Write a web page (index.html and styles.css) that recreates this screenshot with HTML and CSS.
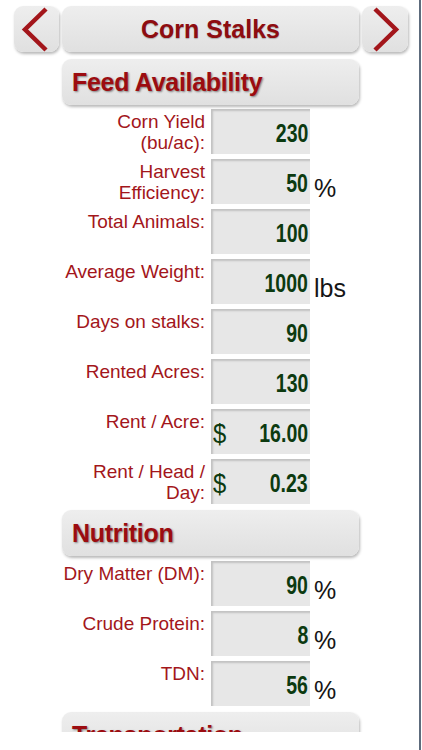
FILE: index.html
```html
<!DOCTYPE html>
<html>
<head>
<meta charset="utf-8">
<link rel="stylesheet" href="styles.css">
</head>
<body>
<div class="frame">
  <div class="screen">
    <div class="topbar">
      <div class="btn nav-btn left">
        <svg width="45" height="46" viewBox="0 0 45 46"><polyline points="32,3 11,23.5 32,44" fill="none" stroke="#a3161b" stroke-width="4.5"/></svg>
      </div>
      <div class="btn title">Corn Stalks</div>
      <div class="btn nav-btn right">
        <svg width="46" height="46" viewBox="0 0 46 46"><polyline points="13,3 34,23.5 13,44" fill="none" stroke="#a3161b" stroke-width="4.5"/></svg>
      </div>
    </div>

    <div class="btn section first">Feed Availability</div>

    <div class="row"><div class="label">Corn Yield<br>(bu/ac):</div><div class="box"><span class="val">230</span></div></div>
    <div class="row"><div class="label">Harvest<br>Efficiency:</div><div class="box"><span class="val">50</span></div><div class="unit">%</div></div>
    <div class="row"><div class="label">Total Animals:</div><div class="box"><span class="val">100</span></div></div>
    <div class="row"><div class="label">Average Weight:</div><div class="box"><span class="val">1000</span></div><div class="unit">lbs</div></div>
    <div class="row"><div class="label">Days on stalks:</div><div class="box"><span class="val">90</span></div></div>
    <div class="row"><div class="label">Rented Acres:</div><div class="box"><span class="val">130</span></div></div>
    <div class="row"><div class="label">Rent / Acre:</div><div class="box"><span class="cur">$</span><span class="val">16.00</span></div></div>
    <div class="row"><div class="label">Rent / Head /<br>Day:</div><div class="box"><span class="cur">$</span><span class="val">0.23</span></div></div>

    <div class="btn section">Nutrition</div>

    <div class="row"><div class="label">Dry Matter (DM):</div><div class="box"><span class="val">90</span></div><div class="unit">%</div></div>
    <div class="row"><div class="label">Crude Protein:</div><div class="box"><span class="val">8</span></div><div class="unit">%</div></div>
    <div class="row"><div class="label">TDN:</div><div class="box"><span class="val">56</span></div><div class="unit">%</div></div>

    <div class="btn section">Transportation</div>
  </div>
</div>
</body>
</html>
```

FILE: styles.css
```css
html, body {
  margin: 0;
  padding: 0;
  background: #ffffff;
}

.frame {
  width: 419px;
  height: 750px;
  border-right: 2px solid #5d6b7c;
  box-sizing: content-box;
}

.screen {
  height: 732px;
  overflow: hidden;
  padding-top: 6px;
  box-sizing: border-box;
  font-family: "Liberation Sans", Arial, sans-serif;
}

.topbar {
  display: flex;
  gap: 3px;
  padding-left: 14px;
  height: 46px;
}

.btn {
  background: linear-gradient(#eeeeee, #e0e0e0);
  border-radius: 9px;
  box-shadow: 1px 2px 3px rgba(0, 0, 0, 0.28);
  box-sizing: border-box;
}

.nav-btn {
  width: 45px;
  height: 46px;
}

.nav-btn svg {
  display: block;
}

.nav-btn.right {
  width: 46px;
}

.title {
  width: 297px;
  height: 46px;
  text-align: center;
  font-weight: bold;
  font-size: 25px;
  line-height: 46px;
  color: #8e0c10;
  text-shadow: 0 1px 1px rgba(0, 0, 0, 0.25);
}

.section {
  width: 297px;
  height: 46px;
  margin-left: 62px;
  margin-top: 6px;
  margin-bottom: 5px;
  padding-left: 10px;
  font-weight: bold;
  font-size: 25px;
  letter-spacing: -0.3px;
  line-height: 46px;
  color: #9c0c10;
  text-shadow: 1px 1px 2px rgba(0, 0, 0, 0.45);
}

.section.first {
  margin-top: 7px;
  margin-bottom: 4px;
}

.row {
  display: flex;
  height: 45px;
  margin-bottom: 5px;
}

.label {
  width: 205px;
  text-align: right;
  font-size: 19px;
  line-height: 21px;
  padding-top: 2px;
  color: #a3161b;
  box-sizing: border-box;
}

.box {
  width: 99px;
  height: 45px;
  margin-left: 6px;
  background: #e7e7e7;
  box-shadow: inset 2px 2px 2px rgba(0, 0, 0, 0.16);
  display: flex;
  align-items: flex-start;
  padding: 11px 2px 0 2px;
  box-sizing: border-box;
  font-family: "Liberation Sans", Arial, sans-serif;
  color: #0c3a10;
}

.val {
  margin-left: auto;
  font-size: 26px;
  line-height: 26px;
  font-weight: bold;
  transform: scaleX(0.75);
  transform-origin: right center;
}

.cur {
  font-size: 28px;
  line-height: 28px;
  margin-top: 0;
  transform: scaleX(0.85);
  transform-origin: left center;
}

.unit {
  margin-left: 4px;
  padding-top: 17px;
  font-size: 25px;
  line-height: 25px;
  color: #151515;
}
```
